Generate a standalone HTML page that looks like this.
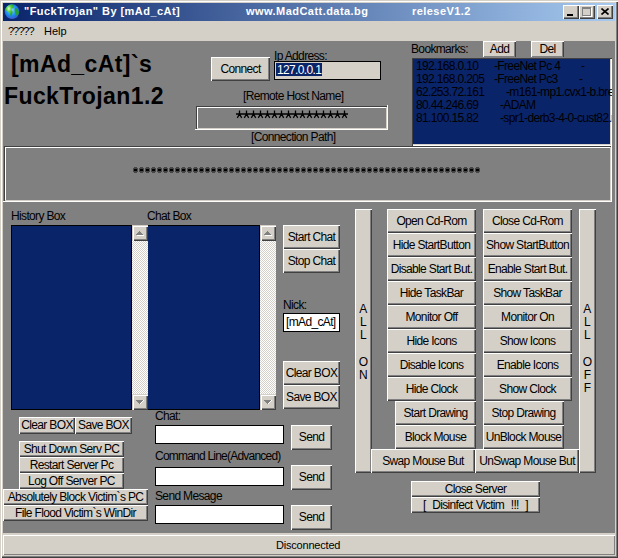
<!DOCTYPE html><html><head><meta charset="utf-8"><style>
*{margin:0;padding:0;box-sizing:content-box}
html,body{width:618px;height:558px;overflow:hidden;background:#d4d0c8;font-family:"Liberation Sans", sans-serif;}
div{position:absolute}
.t{white-space:pre;font-size:12px;line-height:13px;letter-spacing:-0.65px;color:#000}
.b{background:#d4d0c8;box-shadow:inset 1px 1px #fff,inset -1px -1px #404040,inset -2px -2px #808080;text-align:center;white-space:pre;font-size:12px;letter-spacing:-0.65px;color:#000;overflow:hidden}
.i{border:1px solid #000;overflow:hidden}
.tb{background:#d4d0c8;box-shadow:inset 1px 1px #fff,inset -1px -1px #404040,inset -2px -2px #808080}
.sb{background:#d4d0c8;box-shadow:inset 1px 1px #d4d0c8,inset 2px 2px #fff,inset -1px -1px #404040,inset -2px -2px #808080}
</style></head><body><div class="" style="left:0px;top:0px;width:618px;height:558px;box-shadow:inset 1px 1px #d4d0c8,inset 2px 2px #fff,inset -1px -1px #404040,inset -2px -2px #808080;background:#d4d0c8"></div>
<div class="" style="left:3px;top:3px;width:612px;height:18px;background:linear-gradient(to right,#0a246a,#a6caf0)"></div>
<svg style="position:absolute;left:4px;top:3px" width="17" height="17" viewBox="0 0 17 17">
<defs><radialGradient id="g1" cx="0.45" cy="0.4" r="0.65"><stop offset="0" stop-color="#8ee0ff"/><stop offset="0.55" stop-color="#1e8ef0"/><stop offset="1" stop-color="#2a50c8"/></radialGradient>
<radialGradient id="g2" cx="0.4" cy="0.35" r="0.6"><stop offset="0" stop-color="#d8ffc8"/><stop offset="0.45" stop-color="#5ad04a"/><stop offset="1" stop-color="#20a020"/></radialGradient></defs>
<circle cx="8" cy="8.6" r="7.3" fill="url(#g1)"/>
<path d="M2.2,4.6 C3.5,2.2 6,1.4 9,1.6 C10,2.2 10.3,3 9.8,4.2 C9,5 7.8,5.2 7.2,6.2 C7.8,7.4 8.8,8 8.6,9.6 C8.2,11 7.6,12 7,13.2 C6.3,12 6,10.6 5.2,9.6 C3.6,9 2.2,7.8 1.4,6.6 C1.5,5.8 1.8,5.2 2.2,4.6Z" fill="url(#g2)"/>
<path d="M11,4.6 C12.6,5.4 14.3,7 14.9,9 C14.8,11 14,12.4 13,13.2 C12.4,11.8 11.8,10.6 11,10 C10.6,8.4 10.7,6.2 11,4.6Z" fill="#22a028"/>
<path d="M8.8,2.2 C9.8,2.4 10.3,3.5 9.8,4.8 C9.2,4.5 8.8,3.5 8.8,2.2Z" fill="#3cba3c"/>
<path d="M3,13.5 C5,15.5 11,15.8 13.5,13.5" stroke="#6a6ae0" stroke-width="0.8" fill="none" opacity="0.6"/>
</svg>
<div class="t" style="left:24px;top:5px;font-weight:bold;color:#fff;letter-spacing:0.45px;font-size:11px">"FuckTrojan" By [mAd_cAt]</div>
<div class="t" style="left:246px;top:5px;font-weight:bold;color:#fff;letter-spacing:0.45px;font-size:11px">www.MadCatt.data.bg</div>
<div class="t" style="left:412px;top:5px;font-weight:bold;color:#fff;letter-spacing:0.45px;font-size:11px">releseV1.2</div>
<div class="tb" style="left:563px;top:5px;width:16px;height:14px;"><div style="left:4px;top:9px;width:6px;height:2px;background:#000"></div></div>
<div class="tb" style="left:579px;top:5px;width:16px;height:14px;"><div style="left:3px;top:2px;width:7px;height:6px;border:1px solid #808080;border-top-width:2px;box-shadow:1px 1px #fff"></div></div>
<div class="tb" style="left:597px;top:5px;width:16px;height:14px;"><svg style="position:absolute;left:4px;top:3px" width="8" height="7" viewBox="0 0 8 7"><path d="M0.5,0.5 L7.5,6.5 M7.5,0.5 L0.5,6.5" stroke="#000" stroke-width="1.6"/></svg></div>
<div class="t" style="left:8px;top:25px;letter-spacing:-1px;font-size:11px">?????</div>
<div class="t" style="left:44px;top:25px;letter-spacing:0;font-size:11px">Help</div>
<div class="" style="left:3px;top:41px;width:612px;height:492px;background:#808080"></div>
<div class="t" style="left:11px;top:51px;font-size:23px;line-height:27px;font-weight:bold;letter-spacing:0.4px;color:#000">[mAd_cAt]`s</div>
<div class="t" style="left:4px;top:83px;font-size:23px;line-height:27px;font-weight:bold;letter-spacing:0.4px;color:#000">FuckTrojan1.2</div>
<div class="b" style="left:211px;top:57px;width:59px;height:24px;line-height:24px;"><span style="">Connect</span></div>
<div class="t" style="left:274px;top:50px;">Ip Address:</div>
<div class="i" style="left:274px;top:61px;width:105px;height:17px;background:#d4d0c8"><div style="left:1px;top:1px;width:46px;height:13px;background:#0a246a"></div><div class="t" style="left:2px;top:2px;color:#fff">127.0.0.1</div></div>
<div class="t" style="left:243px;top:90px;">[Remote Host Name]</div>
<div class="" style="left:195px;top:105px;width:193px;height:25px;box-shadow:inset -1px -1px #fff, inset 1px 1px #808080, inset 2px 2px #404040, inset -2px -2px #d4d0c8, inset 3px 3px #fff"></div>
<svg style="position:absolute;left:236px;top:110px" width="112" height="9"><path transform="translate(0,0)" d="M3.5,0.5V4M0,4H7M3.5,4L1.3,7.8M3.5,4L5.7,7.8" stroke="#000" stroke-width="1.3" fill="none"/><path transform="translate(7,0)" d="M3.5,0.5V4M0,4H7M3.5,4L1.3,7.8M3.5,4L5.7,7.8" stroke="#000" stroke-width="1.3" fill="none"/><path transform="translate(14,0)" d="M3.5,0.5V4M0,4H7M3.5,4L1.3,7.8M3.5,4L5.7,7.8" stroke="#000" stroke-width="1.3" fill="none"/><path transform="translate(21,0)" d="M3.5,0.5V4M0,4H7M3.5,4L1.3,7.8M3.5,4L5.7,7.8" stroke="#000" stroke-width="1.3" fill="none"/><path transform="translate(28,0)" d="M3.5,0.5V4M0,4H7M3.5,4L1.3,7.8M3.5,4L5.7,7.8" stroke="#000" stroke-width="1.3" fill="none"/><path transform="translate(35,0)" d="M3.5,0.5V4M0,4H7M3.5,4L1.3,7.8M3.5,4L5.7,7.8" stroke="#000" stroke-width="1.3" fill="none"/><path transform="translate(42,0)" d="M3.5,0.5V4M0,4H7M3.5,4L1.3,7.8M3.5,4L5.7,7.8" stroke="#000" stroke-width="1.3" fill="none"/><path transform="translate(49,0)" d="M3.5,0.5V4M0,4H7M3.5,4L1.3,7.8M3.5,4L5.7,7.8" stroke="#000" stroke-width="1.3" fill="none"/><path transform="translate(56,0)" d="M3.5,0.5V4M0,4H7M3.5,4L1.3,7.8M3.5,4L5.7,7.8" stroke="#000" stroke-width="1.3" fill="none"/><path transform="translate(63,0)" d="M3.5,0.5V4M0,4H7M3.5,4L1.3,7.8M3.5,4L5.7,7.8" stroke="#000" stroke-width="1.3" fill="none"/><path transform="translate(70,0)" d="M3.5,0.5V4M0,4H7M3.5,4L1.3,7.8M3.5,4L5.7,7.8" stroke="#000" stroke-width="1.3" fill="none"/><path transform="translate(77,0)" d="M3.5,0.5V4M0,4H7M3.5,4L1.3,7.8M3.5,4L5.7,7.8" stroke="#000" stroke-width="1.3" fill="none"/><path transform="translate(84,0)" d="M3.5,0.5V4M0,4H7M3.5,4L1.3,7.8M3.5,4L5.7,7.8" stroke="#000" stroke-width="1.3" fill="none"/><path transform="translate(91,0)" d="M3.5,0.5V4M0,4H7M3.5,4L1.3,7.8M3.5,4L5.7,7.8" stroke="#000" stroke-width="1.3" fill="none"/><path transform="translate(98,0)" d="M3.5,0.5V4M0,4H7M3.5,4L1.3,7.8M3.5,4L5.7,7.8" stroke="#000" stroke-width="1.3" fill="none"/><path transform="translate(105,0)" d="M3.5,0.5V4M0,4H7M3.5,4L1.3,7.8M3.5,4L5.7,7.8" stroke="#000" stroke-width="1.3" fill="none"/></svg>
<div class="t" style="left:251px;top:131px;">[Connection Path]</div>
<div class="t" style="left:411px;top:43px;">Bookmarks:</div>
<div class="b" style="left:483px;top:41px;width:33px;height:17px;line-height:17px;"><span style="">Add</span></div>
<div class="b" style="left:531px;top:41px;width:33px;height:17px;line-height:17px;"><span style="">Del</span></div>
<div class="" style="left:3px;top:145px;width:609px;height:57px;box-shadow:inset -1px -1px #fff, inset 1px 1px #808080, inset 2px 2px #404040, inset -2px -2px #d4d0c8, inset 3px 3px #fff"></div>
<svg style="position:absolute;left:133px;top:166px" width="350" height="8"><g transform="translate(0,0)"><path d="M1,1h3v1h1v4h-1v1h-3v-1h-1v-4h1z" fill="#000" opacity="0.45"/><rect x="1" y="3" width="3" height="2" fill="#000"/></g><g transform="translate(6,0)"><path d="M1,1h3v1h1v4h-1v1h-3v-1h-1v-4h1z" fill="#000" opacity="0.45"/><rect x="1" y="3" width="3" height="2" fill="#000"/></g><g transform="translate(12,0)"><path d="M1,1h3v1h1v4h-1v1h-3v-1h-1v-4h1z" fill="#000" opacity="0.45"/><rect x="1" y="3" width="3" height="2" fill="#000"/></g><g transform="translate(18,0)"><path d="M1,1h3v1h1v4h-1v1h-3v-1h-1v-4h1z" fill="#000" opacity="0.45"/><rect x="1" y="3" width="3" height="2" fill="#000"/></g><g transform="translate(24,0)"><path d="M1,1h3v1h1v4h-1v1h-3v-1h-1v-4h1z" fill="#000" opacity="0.45"/><rect x="1" y="3" width="3" height="2" fill="#000"/></g><g transform="translate(30,0)"><path d="M1,1h3v1h1v4h-1v1h-3v-1h-1v-4h1z" fill="#000" opacity="0.45"/><rect x="1" y="3" width="3" height="2" fill="#000"/></g><g transform="translate(36,0)"><path d="M1,1h3v1h1v4h-1v1h-3v-1h-1v-4h1z" fill="#000" opacity="0.45"/><rect x="1" y="3" width="3" height="2" fill="#000"/></g><g transform="translate(42,0)"><path d="M1,1h3v1h1v4h-1v1h-3v-1h-1v-4h1z" fill="#000" opacity="0.45"/><rect x="1" y="3" width="3" height="2" fill="#000"/></g><g transform="translate(48,0)"><path d="M1,1h3v1h1v4h-1v1h-3v-1h-1v-4h1z" fill="#000" opacity="0.45"/><rect x="1" y="3" width="3" height="2" fill="#000"/></g><g transform="translate(54,0)"><path d="M1,1h3v1h1v4h-1v1h-3v-1h-1v-4h1z" fill="#000" opacity="0.45"/><rect x="1" y="3" width="3" height="2" fill="#000"/></g><g transform="translate(60,0)"><path d="M1,1h3v1h1v4h-1v1h-3v-1h-1v-4h1z" fill="#000" opacity="0.45"/><rect x="1" y="3" width="3" height="2" fill="#000"/></g><g transform="translate(66,0)"><path d="M1,1h3v1h1v4h-1v1h-3v-1h-1v-4h1z" fill="#000" opacity="0.45"/><rect x="1" y="3" width="3" height="2" fill="#000"/></g><g transform="translate(72,0)"><path d="M1,1h3v1h1v4h-1v1h-3v-1h-1v-4h1z" fill="#000" opacity="0.45"/><rect x="1" y="3" width="3" height="2" fill="#000"/></g><g transform="translate(78,0)"><path d="M1,1h3v1h1v4h-1v1h-3v-1h-1v-4h1z" fill="#000" opacity="0.45"/><rect x="1" y="3" width="3" height="2" fill="#000"/></g><g transform="translate(84,0)"><path d="M1,1h3v1h1v4h-1v1h-3v-1h-1v-4h1z" fill="#000" opacity="0.45"/><rect x="1" y="3" width="3" height="2" fill="#000"/></g><g transform="translate(90,0)"><path d="M1,1h3v1h1v4h-1v1h-3v-1h-1v-4h1z" fill="#000" opacity="0.45"/><rect x="1" y="3" width="3" height="2" fill="#000"/></g><g transform="translate(96,0)"><path d="M1,1h3v1h1v4h-1v1h-3v-1h-1v-4h1z" fill="#000" opacity="0.45"/><rect x="1" y="3" width="3" height="2" fill="#000"/></g><g transform="translate(102,0)"><path d="M1,1h3v1h1v4h-1v1h-3v-1h-1v-4h1z" fill="#000" opacity="0.45"/><rect x="1" y="3" width="3" height="2" fill="#000"/></g><g transform="translate(108,0)"><path d="M1,1h3v1h1v4h-1v1h-3v-1h-1v-4h1z" fill="#000" opacity="0.45"/><rect x="1" y="3" width="3" height="2" fill="#000"/></g><g transform="translate(114,0)"><path d="M1,1h3v1h1v4h-1v1h-3v-1h-1v-4h1z" fill="#000" opacity="0.45"/><rect x="1" y="3" width="3" height="2" fill="#000"/></g><g transform="translate(120,0)"><path d="M1,1h3v1h1v4h-1v1h-3v-1h-1v-4h1z" fill="#000" opacity="0.45"/><rect x="1" y="3" width="3" height="2" fill="#000"/></g><g transform="translate(126,0)"><path d="M1,1h3v1h1v4h-1v1h-3v-1h-1v-4h1z" fill="#000" opacity="0.45"/><rect x="1" y="3" width="3" height="2" fill="#000"/></g><g transform="translate(132,0)"><path d="M1,1h3v1h1v4h-1v1h-3v-1h-1v-4h1z" fill="#000" opacity="0.45"/><rect x="1" y="3" width="3" height="2" fill="#000"/></g><g transform="translate(138,0)"><path d="M1,1h3v1h1v4h-1v1h-3v-1h-1v-4h1z" fill="#000" opacity="0.45"/><rect x="1" y="3" width="3" height="2" fill="#000"/></g><g transform="translate(144,0)"><path d="M1,1h3v1h1v4h-1v1h-3v-1h-1v-4h1z" fill="#000" opacity="0.45"/><rect x="1" y="3" width="3" height="2" fill="#000"/></g><g transform="translate(150,0)"><path d="M1,1h3v1h1v4h-1v1h-3v-1h-1v-4h1z" fill="#000" opacity="0.45"/><rect x="1" y="3" width="3" height="2" fill="#000"/></g><g transform="translate(156,0)"><path d="M1,1h3v1h1v4h-1v1h-3v-1h-1v-4h1z" fill="#000" opacity="0.45"/><rect x="1" y="3" width="3" height="2" fill="#000"/></g><g transform="translate(162,0)"><path d="M1,1h3v1h1v4h-1v1h-3v-1h-1v-4h1z" fill="#000" opacity="0.45"/><rect x="1" y="3" width="3" height="2" fill="#000"/></g><g transform="translate(168,0)"><path d="M1,1h3v1h1v4h-1v1h-3v-1h-1v-4h1z" fill="#000" opacity="0.45"/><rect x="1" y="3" width="3" height="2" fill="#000"/></g><g transform="translate(174,0)"><path d="M1,1h3v1h1v4h-1v1h-3v-1h-1v-4h1z" fill="#000" opacity="0.45"/><rect x="1" y="3" width="3" height="2" fill="#000"/></g><g transform="translate(180,0)"><path d="M1,1h3v1h1v4h-1v1h-3v-1h-1v-4h1z" fill="#000" opacity="0.45"/><rect x="1" y="3" width="3" height="2" fill="#000"/></g><g transform="translate(186,0)"><path d="M1,1h3v1h1v4h-1v1h-3v-1h-1v-4h1z" fill="#000" opacity="0.45"/><rect x="1" y="3" width="3" height="2" fill="#000"/></g><g transform="translate(192,0)"><path d="M1,1h3v1h1v4h-1v1h-3v-1h-1v-4h1z" fill="#000" opacity="0.45"/><rect x="1" y="3" width="3" height="2" fill="#000"/></g><g transform="translate(198,0)"><path d="M1,1h3v1h1v4h-1v1h-3v-1h-1v-4h1z" fill="#000" opacity="0.45"/><rect x="1" y="3" width="3" height="2" fill="#000"/></g><g transform="translate(204,0)"><path d="M1,1h3v1h1v4h-1v1h-3v-1h-1v-4h1z" fill="#000" opacity="0.45"/><rect x="1" y="3" width="3" height="2" fill="#000"/></g><g transform="translate(210,0)"><path d="M1,1h3v1h1v4h-1v1h-3v-1h-1v-4h1z" fill="#000" opacity="0.45"/><rect x="1" y="3" width="3" height="2" fill="#000"/></g><g transform="translate(216,0)"><path d="M1,1h3v1h1v4h-1v1h-3v-1h-1v-4h1z" fill="#000" opacity="0.45"/><rect x="1" y="3" width="3" height="2" fill="#000"/></g><g transform="translate(222,0)"><path d="M1,1h3v1h1v4h-1v1h-3v-1h-1v-4h1z" fill="#000" opacity="0.45"/><rect x="1" y="3" width="3" height="2" fill="#000"/></g><g transform="translate(228,0)"><path d="M1,1h3v1h1v4h-1v1h-3v-1h-1v-4h1z" fill="#000" opacity="0.45"/><rect x="1" y="3" width="3" height="2" fill="#000"/></g><g transform="translate(234,0)"><path d="M1,1h3v1h1v4h-1v1h-3v-1h-1v-4h1z" fill="#000" opacity="0.45"/><rect x="1" y="3" width="3" height="2" fill="#000"/></g><g transform="translate(240,0)"><path d="M1,1h3v1h1v4h-1v1h-3v-1h-1v-4h1z" fill="#000" opacity="0.45"/><rect x="1" y="3" width="3" height="2" fill="#000"/></g><g transform="translate(246,0)"><path d="M1,1h3v1h1v4h-1v1h-3v-1h-1v-4h1z" fill="#000" opacity="0.45"/><rect x="1" y="3" width="3" height="2" fill="#000"/></g><g transform="translate(252,0)"><path d="M1,1h3v1h1v4h-1v1h-3v-1h-1v-4h1z" fill="#000" opacity="0.45"/><rect x="1" y="3" width="3" height="2" fill="#000"/></g><g transform="translate(258,0)"><path d="M1,1h3v1h1v4h-1v1h-3v-1h-1v-4h1z" fill="#000" opacity="0.45"/><rect x="1" y="3" width="3" height="2" fill="#000"/></g><g transform="translate(264,0)"><path d="M1,1h3v1h1v4h-1v1h-3v-1h-1v-4h1z" fill="#000" opacity="0.45"/><rect x="1" y="3" width="3" height="2" fill="#000"/></g><g transform="translate(270,0)"><path d="M1,1h3v1h1v4h-1v1h-3v-1h-1v-4h1z" fill="#000" opacity="0.45"/><rect x="1" y="3" width="3" height="2" fill="#000"/></g><g transform="translate(276,0)"><path d="M1,1h3v1h1v4h-1v1h-3v-1h-1v-4h1z" fill="#000" opacity="0.45"/><rect x="1" y="3" width="3" height="2" fill="#000"/></g><g transform="translate(282,0)"><path d="M1,1h3v1h1v4h-1v1h-3v-1h-1v-4h1z" fill="#000" opacity="0.45"/><rect x="1" y="3" width="3" height="2" fill="#000"/></g><g transform="translate(288,0)"><path d="M1,1h3v1h1v4h-1v1h-3v-1h-1v-4h1z" fill="#000" opacity="0.45"/><rect x="1" y="3" width="3" height="2" fill="#000"/></g><g transform="translate(294,0)"><path d="M1,1h3v1h1v4h-1v1h-3v-1h-1v-4h1z" fill="#000" opacity="0.45"/><rect x="1" y="3" width="3" height="2" fill="#000"/></g><g transform="translate(300,0)"><path d="M1,1h3v1h1v4h-1v1h-3v-1h-1v-4h1z" fill="#000" opacity="0.45"/><rect x="1" y="3" width="3" height="2" fill="#000"/></g><g transform="translate(306,0)"><path d="M1,1h3v1h1v4h-1v1h-3v-1h-1v-4h1z" fill="#000" opacity="0.45"/><rect x="1" y="3" width="3" height="2" fill="#000"/></g><g transform="translate(312,0)"><path d="M1,1h3v1h1v4h-1v1h-3v-1h-1v-4h1z" fill="#000" opacity="0.45"/><rect x="1" y="3" width="3" height="2" fill="#000"/></g><g transform="translate(318,0)"><path d="M1,1h3v1h1v4h-1v1h-3v-1h-1v-4h1z" fill="#000" opacity="0.45"/><rect x="1" y="3" width="3" height="2" fill="#000"/></g><g transform="translate(324,0)"><path d="M1,1h3v1h1v4h-1v1h-3v-1h-1v-4h1z" fill="#000" opacity="0.45"/><rect x="1" y="3" width="3" height="2" fill="#000"/></g><g transform="translate(330,0)"><path d="M1,1h3v1h1v4h-1v1h-3v-1h-1v-4h1z" fill="#000" opacity="0.45"/><rect x="1" y="3" width="3" height="2" fill="#000"/></g><g transform="translate(336,0)"><path d="M1,1h3v1h1v4h-1v1h-3v-1h-1v-4h1z" fill="#000" opacity="0.45"/><rect x="1" y="3" width="3" height="2" fill="#000"/></g><g transform="translate(342,0)"><path d="M1,1h3v1h1v4h-1v1h-3v-1h-1v-4h1z" fill="#000" opacity="0.45"/><rect x="1" y="3" width="3" height="2" fill="#000"/></g></svg>
<div class="" style="left:411px;top:57px;width:201px;height:89px;background:#0a246a;box-shadow:inset 1px 1px #808080,inset 2px 2px #404040,inset -1px -1px #fff,inset -2px -2px #d4d0c8;overflow:hidden"><div class="t" style="left:5px;top:3px">192.168.0.10</div><div class="t" style="left:83px;top:3px">-FreeNet Pc 4</div><div class="t" style="left:170px;top:3px">-</div><div class="t" style="left:5px;top:16px">192.168.0.205</div><div class="t" style="left:83px;top:16px">-FreeNet Pc3</div><div class="t" style="left:168px;top:16px">-</div><div class="t" style="left:5px;top:29px">62.253.72.161</div><div class="t" style="left:95px;top:29px">-m161-mp1.cvx1-b.bre</div><div class="t" style="left:5px;top:42px">80.44.246.69</div><div class="t" style="left:89px;top:42px">-ADAM</div><div class="t" style="left:5px;top:55px">81.100.15.82</div><div class="t" style="left:89px;top:55px">-spr1-derb3-4-0-cust82.r</div></div>
<div class="t" style="left:11px;top:210px;">History Box</div>
<div class="t" style="left:147px;top:210px;">Chat Box</div>
<div class="" style="left:11px;top:225px;width:121px;height:185px;background:#000"></div>
<div class="" style="left:12px;top:226px;width:119px;height:183px;background:#0a246a"></div>
<div class="" style="left:132px;top:225px;width:16px;height:185px;background-color:#fff;background-image:repeating-conic-gradient(#d4d0c8 0 25%,#fff 0 50%);background-size:2px 2px"></div>
<div class="sb" style="left:132px;top:225px;width:16px;height:16px;"><svg style="position:absolute;left:0;top:0" width="16" height="16"><g fill="#808080"><rect x="7" y="6" width="1" height="1"/><rect x="6" y="7" width="3" height="1"/><rect x="5" y="8" width="5" height="1"/><rect x="4" y="9" width="7" height="1"/></g><rect x="5" y="10" width="7" height="1" fill="#fff"/></svg></div>
<div class="sb" style="left:132px;top:394px;width:16px;height:16px;"><svg style="position:absolute;left:0;top:0" width="16" height="16"><g fill="#808080"><rect x="4" y="6" width="7" height="1"/><rect x="5" y="7" width="5" height="1"/><rect x="6" y="8" width="3" height="1"/><rect x="7" y="9" width="1" height="1"/></g><g fill="#fff"><rect x="11" y="6" width="1" height="1"/><rect x="10" y="7" width="1" height="1"/><rect x="9" y="8" width="1" height="1"/><rect x="8" y="9" width="1" height="1"/></g></svg></div>
<div class="" style="left:148px;top:225px;width:112px;height:185px;background:#000"></div>
<div class="" style="left:148px;top:226px;width:111px;height:183px;background:#0a246a"></div>
<div class="" style="left:260px;top:225px;width:16px;height:185px;background-color:#fff;background-image:repeating-conic-gradient(#d4d0c8 0 25%,#fff 0 50%);background-size:2px 2px"></div>
<div class="sb" style="left:260px;top:225px;width:16px;height:16px;"><svg style="position:absolute;left:0;top:0" width="16" height="16"><g fill="#808080"><rect x="7" y="6" width="1" height="1"/><rect x="6" y="7" width="3" height="1"/><rect x="5" y="8" width="5" height="1"/><rect x="4" y="9" width="7" height="1"/></g><rect x="5" y="10" width="7" height="1" fill="#fff"/></svg></div>
<div class="sb" style="left:260px;top:394px;width:16px;height:16px;"><svg style="position:absolute;left:0;top:0" width="16" height="16"><g fill="#808080"><rect x="4" y="6" width="7" height="1"/><rect x="5" y="7" width="5" height="1"/><rect x="6" y="8" width="3" height="1"/><rect x="7" y="9" width="1" height="1"/></g><g fill="#fff"><rect x="11" y="6" width="1" height="1"/><rect x="10" y="7" width="1" height="1"/><rect x="9" y="8" width="1" height="1"/><rect x="8" y="9" width="1" height="1"/></g></svg></div>
<div class="b" style="left:283px;top:225px;width:57px;height:24px;line-height:24px;"><span style="">Start Chat</span></div>
<div class="b" style="left:283px;top:249px;width:57px;height:24px;line-height:24px;"><span style="">Stop Chat</span></div>
<div class="t" style="left:283px;top:299px;">Nick:</div>
<div class="i" style="left:283px;top:313px;width:55px;height:17px;background:#fff"><div class="t" style="left:2px;top:2px">[mAd_cAt]</div></div>
<div class="b" style="left:283px;top:361px;width:57px;height:24px;line-height:24px;"><span style="">Clear BOX</span></div>
<div class="b" style="left:283px;top:385px;width:57px;height:24px;line-height:24px;"><span style="">Save BOX</span></div>
<div class="b" style="left:19px;top:417px;width:56px;height:17px;line-height:17px;"><span style="">Clear BOX</span></div>
<div class="b" style="left:75px;top:417px;width:57px;height:17px;line-height:17px;"><span style="">Save BOX</span></div>
<div class="b" style="left:19px;top:441px;width:105px;height:16px;line-height:16px;"><span style="">Shut Down Serv PC</span></div>
<div class="b" style="left:19px;top:457px;width:105px;height:16px;line-height:16px;"><span style="">Restart Server Pc</span></div>
<div class="b" style="left:19px;top:473px;width:105px;height:16px;line-height:16px;"><span style="">Log Off Server PC</span></div>
<div class="b" style="left:3px;top:489px;width:145px;height:16px;line-height:16px;"><span style="">Absolutely Block Victim`s PC</span></div>
<div class="b" style="left:3px;top:505px;width:145px;height:16px;line-height:16px;"><span style="">File Flood Victim`s WinDir</span></div>
<div class="t" style="left:155px;top:410px;">Chat:</div>
<div class="i" style="left:155px;top:425px;width:127px;height:17px;background:#fff"></div>
<div class="b" style="left:291px;top:425px;width:41px;height:25px;line-height:25px;"><span style="">Send</span></div>
<div class="t" style="left:155px;top:450px;letter-spacing:-0.78px">Command Line(Advanced)</div>
<div class="i" style="left:155px;top:467px;width:127px;height:17px;background:#fff"></div>
<div class="b" style="left:291px;top:465px;width:41px;height:25px;line-height:25px;"><span style="">Send</span></div>
<div class="t" style="left:155px;top:490px;">Send Mesage</div>
<div class="i" style="left:155px;top:505px;width:127px;height:17px;background:#fff"></div>
<div class="b" style="left:291px;top:505px;width:41px;height:25px;line-height:25px;"><span style="">Send</span></div>
<div class="b" style="left:355px;top:209px;width:17px;height:264px;line-height:264px;"><span style=""></span></div>
<div class="t" style="left:358px;top:303px;text-align:center;width:10px;line-height:13.2px">A
L
L

O
N</div>
<div class="b" style="left:579px;top:209px;width:17px;height:264px;line-height:264px;"><span style=""></span></div>
<div class="t" style="left:582px;top:303px;text-align:center;width:10px;line-height:13.2px">A
L
L

O
F
F</div>
<div class="b" style="left:387px;top:209px;width:89px;height:24px;line-height:24px;"><span style="">Open Cd-Rom</span></div>
<div class="b" style="left:483px;top:209px;width:89px;height:24px;line-height:24px;"><span style="">Close Cd-Rom</span></div>
<div class="b" style="left:387px;top:233px;width:89px;height:24px;line-height:24px;"><span style="">Hide StartButton</span></div>
<div class="b" style="left:483px;top:233px;width:89px;height:24px;line-height:24px;"><span style="">Show StartButton</span></div>
<div class="b" style="left:387px;top:257px;width:89px;height:24px;line-height:24px;"><span style="">Disable Start But.</span></div>
<div class="b" style="left:483px;top:257px;width:89px;height:24px;line-height:24px;"><span style="">Enable Start But.</span></div>
<div class="b" style="left:387px;top:281px;width:89px;height:24px;line-height:24px;"><span style="">Hide TaskBar</span></div>
<div class="b" style="left:483px;top:281px;width:89px;height:24px;line-height:24px;"><span style="">Show TaskBar</span></div>
<div class="b" style="left:387px;top:305px;width:89px;height:24px;line-height:24px;"><span style="">Monitor Off</span></div>
<div class="b" style="left:483px;top:305px;width:89px;height:24px;line-height:24px;"><span style="">Monitor On</span></div>
<div class="b" style="left:387px;top:329px;width:89px;height:24px;line-height:24px;"><span style="">Hide Icons</span></div>
<div class="b" style="left:483px;top:329px;width:89px;height:24px;line-height:24px;"><span style="">Show Icons</span></div>
<div class="b" style="left:387px;top:353px;width:89px;height:24px;line-height:24px;"><span style="">Disable Icons</span></div>
<div class="b" style="left:483px;top:353px;width:89px;height:24px;line-height:24px;"><span style="">Enable Icons</span></div>
<div class="b" style="left:387px;top:377px;width:89px;height:24px;line-height:24px;"><span style="">Hide Clock</span></div>
<div class="b" style="left:483px;top:377px;width:89px;height:24px;line-height:24px;"><span style="">Show Clock</span></div>
<div class="b" style="left:395px;top:401px;width:81px;height:24px;line-height:24px;"><span style="">Start Drawing</span></div>
<div class="b" style="left:483px;top:401px;width:81px;height:24px;line-height:24px;"><span style="">Stop Drawing</span></div>
<div class="b" style="left:395px;top:425px;width:81px;height:24px;line-height:24px;"><span style="">Block Mouse</span></div>
<div class="b" style="left:483px;top:425px;width:81px;height:24px;line-height:24px;"><span style="">UnBlock Mouse</span></div>
<div class="b" style="left:371px;top:449px;width:104px;height:24px;line-height:24px;"><span style="">Swap Mouse But</span></div>
<div class="b" style="left:475px;top:449px;width:104px;height:24px;line-height:24px;"><span style="">UnSwap Mouse But</span></div>
<div class="b" style="left:411px;top:481px;width:129px;height:16px;line-height:16px;"><span style="">Close Server</span></div>
<div class="b" style="left:411px;top:497px;width:129px;height:16px;line-height:16px;"><span style="word-spacing:0.6px">[  Disinfect Victim  !!!  ]</span></div>
<div class="" style="left:3px;top:535px;width:612px;height:20px;background:#d4d0c8;box-shadow:inset 1px 1px #fff,inset -1px -1px #808080"></div>
<div class="t" style="left:276px;top:539px;letter-spacing:-0.2px;font-size:11px">Disconnected</div></body></html>
